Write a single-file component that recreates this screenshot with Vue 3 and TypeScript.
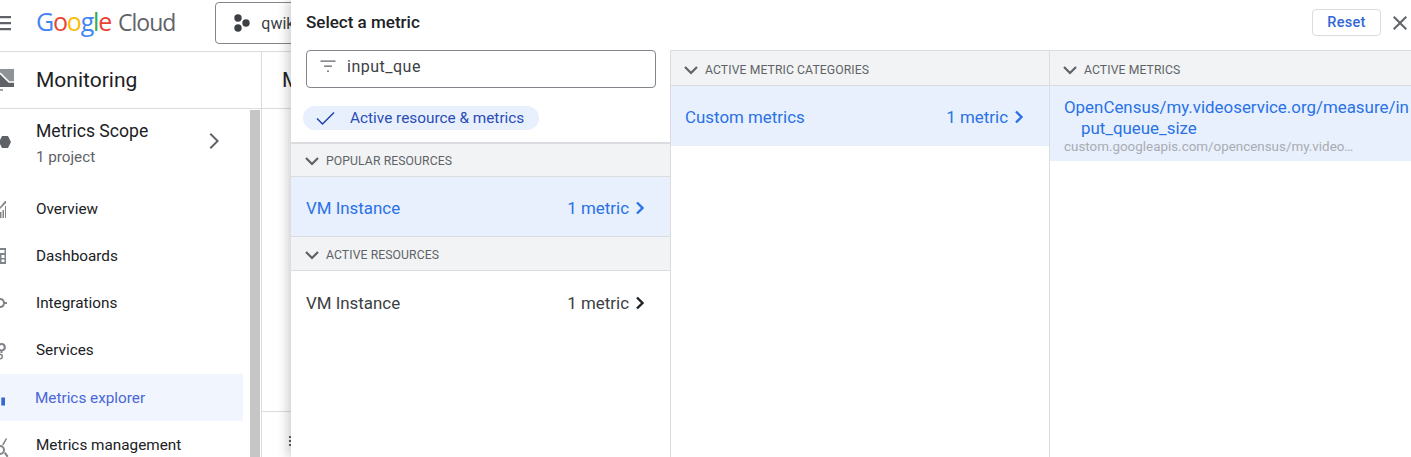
<script setup lang="ts">
interface NavItem {
  label: string
  icon: string
  active?: boolean
}

const navItems: NavItem[] = [
  { label: 'Overview', icon: 'M16 10l5-6h1v2l-6 6zM16 15h1.500v6H16zM18.500 13h1.500v8h-1.500zM21 9h1v12h-1z' },
  { label: 'Dashboards', icon: 'M12 4h10v16H12zM14 6v3h6.500V6zM14 11v7h2v-7zM17.500 11v3h3v-3zM17.500 15.500v2.500h3v-2.500z' },
  { label: 'Integrations', icon: 'M16 7a5 5 0 0 1 4.900 4H23v2h-2.100A5 5 0 1 1 16 7zM16 9a3 3 0 1 0 0 6 3 3 0 0 0 0-6z' },
  { label: 'Services', icon: 'M17.500 5a4.200 4.200 0 0 1 1 8.300V15h-2v-1.800A4.200 4.200 0 0 1 17.500 5zM17.500 7a2.200 2.200 0 1 0 0 4.400 2.200 2.200 0 0 0 0-4.400zM16 15.500a3 3 0 1 1 0 6 3 3 0 0 1 0-6zM16 17a1.500 1.500 0 1 0 0 3 1.500 1.500 0 0 0 0-3z' },
  { label: 'Metrics explorer', icon: 'M17.300 11.500H21v8h-3.700z', active: true },
  { label: 'Metrics management', icon: 'M22 5l1.200.8-3.800 6.600-1.300-.8zM16 12a5 5 0 1 1 0 10 5 5 0 0 1 0-10zM16 14a3 3 0 1 0 0 6 3 3 0 0 0 0-6zM20 20.500l1.500-1.500 3 4-1.500 1.500z' },
]

const logoLetters = [
  { ch: 'G', color: '#4285f4' },
  { ch: 'o', color: '#ea4335' },
  { ch: 'o', color: '#fbbc05' },
  { ch: 'g', color: '#4285f4' },
  { ch: 'l', color: '#34a853' },
  { ch: 'e', color: '#ea4335' },
]
</script>

<template>
  <div class="page">
    <header class="topbar">
      <svg class="menu-icon" width="24" height="24" viewBox="0 0 24 24"><path d="M3 4h18v2.300H3zm0 6h18v2.300H3zm0 6h18v2.300H3z" /></svg>
      <div class="logo">
        <span v-for="(l, i) in logoLetters" :key="i" class="logo-letter" :style="{ color: l.color }">{{ l.ch }}</span>
        <span class="logo-cloud">Cloud</span>
      </div>
      <div class="project-picker">
        <svg width="18" height="18" viewBox="0 0 18 18"><circle cx="5" cy="4" r="3.700" /><circle cx="13" cy="9" r="3.700" /><circle cx="5" cy="14" r="3.700" /></svg>
        <span>qwik</span>
      </div>
    </header>

    <div class="below">
      <aside class="sidebar">
        <div class="product">
          <svg class="product-icon" width="30" height="30" viewBox="0 0 30 30">
            <path d="M15 4h14v18H15z" fill="#8f9397" />
            <path d="M15 8l9 9h5v5H15z" fill="#5f6368" />
            <path d="M15 8l9 9h5" fill="none" stroke="#fff" stroke-width="1.600" />
            <path d="M15 24h3v2h-3z" fill="#a0a4a8" />
          </svg>
          <span>Monitoring</span>
        </div>
        <div class="side-body">
          <nav class="side-nav">
            <div class="scope">
              <svg class="side-icon side-icon--scope" width="24" height="24" viewBox="0 0 24 24"><path d="M18 6h6l3 6-3 6h-6l-3-6z" /></svg>
              <div class="scope-text">
                <div class="scope-title">Metrics Scope</div>
                <div class="scope-sub">1 project</div>
              </div>
              <svg class="scope-arrow" width="24" height="24" viewBox="0 0 24 24"><path d="M8.600 5.400L10 4l8 8-8 8-1.400-1.400L15.200 12z" /></svg>
            </div>
            <a v-for="item in navItems" :key="item.label" class="nav-item" :class="{ 'is-active': item.active }">
              <svg class="side-icon" width="24" height="24" viewBox="0 0 24 24"><path :d="item.icon" fill-rule="evenodd" /></svg>
              <span>{{ item.label }}</span>
            </a>
          </nav>
          <div class="scrollbar"></div>
        </div>
      </aside>

      <main class="content">
        <div class="content-title">M</div>
        <div class="content-main"></div>
        <div class="content-foot">
          <svg width="4" height="12" viewBox="0 0 4 12"><path d="M1 1h2v2H1zm0 4h2v2H1zm0 4h2v2H1z" fill="#5f6368" /></svg>
        </div>
      </main>
    </div>

    <section class="dialog">
      <div class="dialog-head">
        <h2>Select a metric</h2>
        <button class="reset">Reset</button>
        <svg class="close" width="24" height="24" viewBox="0 0 24 24"><path d="M19 6.400L17.600 5 12 10.600 6.400 5 5 6.400 10.600 12 5 17.600 6.400 19 12 13.400 17.600 19 19 17.600 13.400 12z" /></svg>
      </div>

      <div class="columns">
        <div class="col col-first">
          <div class="filter">
            <svg width="18" height="18" viewBox="0 0 18 18"><path d="M1.500 3.500h15v1.300h-15zm3.500 5h8v1.300H5zm3 5h2v1.300H8z" fill="#5f6368" /></svg>
            <span>input_que</span>
          </div>
          <div class="chip-row">
            <div class="chip">
              <svg width="22" height="18" viewBox="0 0 22 18"><path d="M2 9.500l5.500 5.500L19 3.500" fill="none" stroke="#1a3fa8" stroke-width="1.500" /></svg>
              <span>Active resource &amp; metrics</span>
            </div>
          </div>
          <div class="section-head section-head--thick">
            <svg class="chev" width="14" height="14" viewBox="0 0 14 14"><path d="M1 4l6 6 6-6" fill="none" stroke="#5f6368" stroke-width="2.200" /></svg>
            <span>POPULAR RESOURCES</span>
          </div>
          <div class="row is-selected">
            <span>VM Instance</span>
            <span class="row-count">1 metric<svg width="10" height="14" viewBox="0 0 10 14"><path d="M2 1.500L7.500 7 2 12.500" fill="none" stroke="currentColor" stroke-width="2.400" /></svg></span>
          </div>
          <div class="section-head section-head--short">
            <svg class="chev" width="14" height="14" viewBox="0 0 14 14"><path d="M1 4l6 6 6-6" fill="none" stroke="#5f6368" stroke-width="2.200" /></svg>
            <span>ACTIVE RESOURCES</span>
          </div>
          <div class="row">
            <span>VM Instance</span>
            <span class="row-count">1 metric<svg width="10" height="14" viewBox="0 0 10 14"><path d="M2 1.500L7.500 7 2 12.500" fill="none" stroke="#202124" stroke-width="2.400" /></svg></span>
          </div>
        </div>

        <div class="col">
          <div class="section-head section-head--top">
            <svg class="chev" width="14" height="14" viewBox="0 0 14 14"><path d="M1 4l6 6 6-6" fill="none" stroke="#5f6368" stroke-width="2.200" /></svg>
            <span>ACTIVE METRIC CATEGORIES</span>
          </div>
          <div class="row row--narrow is-selected">
            <span>Custom metrics</span>
            <span class="row-count">1 metric<svg width="10" height="14" viewBox="0 0 10 14"><path d="M2 1.500L7.500 7 2 12.500" fill="none" stroke="currentColor" stroke-width="2.400" /></svg></span>
          </div>
        </div>

        <div class="col col-last">
          <div class="section-head section-head--top">
            <svg class="chev" width="14" height="14" viewBox="0 0 14 14"><path d="M1 4l6 6 6-6" fill="none" stroke="#5f6368" stroke-width="2.200" /></svg>
            <span>ACTIVE METRICS</span>
          </div>
          <div class="metric">
            <div class="metric-name">OpenCensus/my.videoservice.org/measure/input_queue_size</div>
            <div class="metric-id">custom.googleapis.com/opencensus/my.video…</div>
          </div>
        </div>
      </div>
    </section>
  </div>
</template>

<style scoped>
.page {
  position: relative;
  width: 1411px;
  height: 457px;
  overflow: hidden;
  background: #fff;
  font-family: Roboto, 'Liberation Sans', sans-serif;
  color: #202124;
}

.topbar {
  display: flex;
  align-items: flex-start;
  height: 51px;
  border-bottom: 1px solid #dadce0;
}

.menu-icon {
  flex: none;
  margin: 12px 0 0 -10px;
  fill: #5f6368;
}

.logo {
  margin: 6px 0 0 22px;
  font-family: 'Open Sans', sans-serif;
  font-size: 25px;
  line-height: 30px;
  white-space: nowrap;
}

.logo-letter {
  font-weight: 500;
  letter-spacing: -1.2px;
}

.logo-cloud {
  margin-left: 7px;
  font-size: 23px;
  letter-spacing: -1px;
  color: #5f6368;
}

.project-picker {
  display: flex;
  align-items: center;
  gap: 10px;
  flex: none;
  box-sizing: border-box;
  width: 200px;
  height: 42px;
  margin: 2px 0 0 40px;
  padding-left: 17px;
  border: 1px solid #80868b;
  border-radius: 4px;
  font-size: 16px;
  color: #3c4043;
}

.project-picker svg {
  fill: #3c4043;
}

.below {
  display: flex;
  height: 405px;
}

.sidebar {
  flex: none;
  width: 261px;
  border-right: 1px solid #dadce0;
}

.product {
  display: flex;
  align-items: center;
  gap: 21px;
  height: 56px;
  border-bottom: 1px solid #dadce0;
  font-size: 21px;
  color: #202124;
}

.product-icon {
  flex: none;
  margin-left: -15px;
}

.side-body {
  display: flex;
  height: 348px;
}

.side-nav {
  flex: none;
  width: 250px;
}

.scope {
  display: flex;
  align-items: center;
  height: 76px;
}

.side-icon {
  flex: none;
  margin-left: -16px;
  margin-right: 28px;
  overflow: visible;
  fill: #808488;
}

.side-icon--scope {
  margin-top: -10px;
  fill: #5f6368;
}

.scope-text {
  flex: 1;
  margin-top: -9px;
}

.scope-title {
  font-size: 17.600px;
  line-height: 24px;
}

.scope-sub {
  margin-top: 4px;
  font-size: 15.200px;
  line-height: 20px;
  color: #5f6368;
}

.scope-arrow {
  flex: none;
  margin-right: 25px;
  margin-top: -12px;
  fill: #5f6368;
}

.nav-item {
  display: flex;
  align-items: center;
  width: 243px;
  height: 47px;
  font-size: 15.300px;
  color: #202124;
}

.nav-item.is-active {
  margin-top: 1px;
  background: #f0f5fe;
  color: #4a66d8;
}

.nav-item.is-active .side-icon {
  margin-right: 27px;
  fill: #3367d6;
}

.scrollbar {
  flex: none;
  width: 10px;
  margin-top: 1px;
  background: #c6c6c6;
}

.content {
  display: flex;
  flex: 1;
  flex-direction: column;
}

.content-title {
  height: 56px;
  padding-left: 20px;
  border-bottom: 1px solid #dadce0;
  font-size: 21px;
  line-height: 56px;
  white-space: nowrap;
}

.content-main {
  height: 302px;
}

.content-foot {
  flex: 1;
  padding-left: 26px;
  padding-top: 20px;
  border-top: 1px solid #dadce0;
}

.dialog {
  position: absolute;
  top: 0;
  right: 0;
  bottom: 0;
  left: 291px;
  display: flex;
  flex-direction: column;
  background: #fff;
  box-shadow: -4px 0 10px rgba(0, 0, 0, 0.18);
}

.dialog-head {
  display: flex;
  flex: none;
  align-items: center;
  box-sizing: border-box;
  height: 50px;
  padding: 0 0 5px 15px;
}

.dialog-head h2 {
  flex: 1;
  margin: 0;
  padding-bottom: 2px;
  font-size: 17px;
  font-weight: 500;
  color: #202124;
}

.reset {
  width: 69px;
  height: 27px;
  padding: 0;
  border: 1px solid #dadce0;
  border-radius: 4px;
  background: #fff;
  color: #3367d6;
  font-family: inherit;
  font-size: 14.500px;
  font-weight: 500;
  letter-spacing: 0.3px;
}

.close {
  flex: none;
  margin: 0 -1px 0 7px;
  fill: #5f6368;
}

.columns {
  display: grid;
  flex: 1;
  grid-template-columns: 380px 379px 1fr;
  min-height: 0;
}

.col {
  min-width: 0;
  border-right: 1px solid #dadce0;
}

.col-last {
  border-right: 0;
}

.filter {
  display: flex;
  align-items: center;
  gap: 10px;
  box-sizing: border-box;
  width: 350px;
  height: 38px;
  margin-left: 15px;
  padding: 0 0 6px 12px;
  border: 1px solid #80868b;
  border-radius: 4px;
  font-size: 16px;
  letter-spacing: 0.5px;
  color: #3c4043;
}

.chip-row {
  display: flex;
  padding: 18px 0 12px 12px;
}

.chip {
  display: flex;
  align-items: center;
  gap: 13px;
  box-sizing: border-box;
  width: 236px;
  height: 24px;
  padding-left: 12px;
  border-radius: 12px;
  background: #e8f0fe;
  color: #2a4cb5;
  font-size: 15.350px;
  white-space: nowrap;
}

.section-head {
  display: flex;
  align-items: center;
  gap: 7px;
  box-sizing: border-box;
  height: 35px;
  padding: 1px 0 0 14px;
  border-bottom: 1px solid #dadce0;
  background: #f1f3f4;
  color: #5f6368;
  font-size: 12.200px;
  letter-spacing: 0.1px;
}

.section-head--thick {
  border-top: 2px solid #dadce0;
}

.section-head--short {
  height: 34px;
  padding-top: 2px;
}

.section-head--top {
  height: 36px;
  padding-top: 3px;
  padding-left: 13px;
  border-top: 1px solid #dadce0;
}

.chev {
  flex: none;
}

.row {
  display: flex;
  align-items: center;
  justify-content: space-between;
  box-sizing: border-box;
  height: 60px;
  padding: 3px 25px 0 15px;
  font-size: 16.900px;
  color: #3c4043;
}

.row.is-selected {
  border-bottom: 1px solid #dadce0;
  background: #e8f0fe;
  color: #2a72e5;
}

.row--narrow.is-selected {
  padding-top: 2px;
  padding-left: 14px;
  border-bottom: 0;
}

.row-count {
  display: flex;
  align-items: center;
  gap: 6px;
}

.metric {
  box-sizing: border-box;
  height: 75px;
  padding: 11px 0 0 14px;
  background: #e8f0fe;
}

.metric-name {
  padding-left: 17px;
  text-indent: -17px;
  overflow-wrap: anywhere;
  font-size: 16.900px;
  line-height: 21px;
  color: #2a72e5;
}

.metric-id {
  font-size: 13.400px;
  line-height: 15px;
  color: #a8acb0;
  white-space: nowrap;
}
</style>
